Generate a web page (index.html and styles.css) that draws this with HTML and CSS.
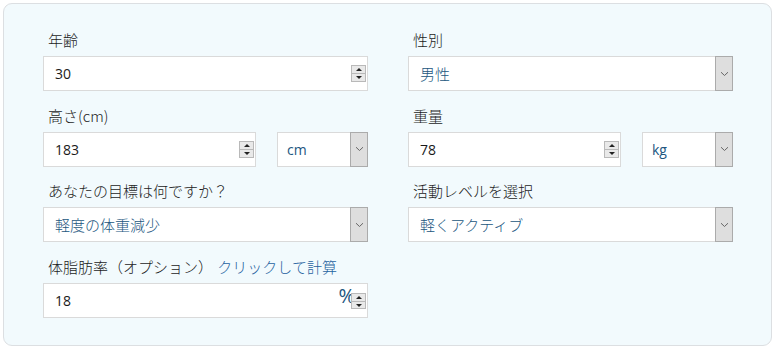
FILE: index.html
```html
<!DOCTYPE html>
<html lang="ja">
<head>
<meta charset="utf-8">
<link rel="stylesheet" href="styles.css">
</head>
<body>
<div class="card">
  <div class="grid">
    <div class="field">
      <div class="label">年齢</div>
      <div class="box">
        <span class="val num">30</span>
        <span class="spin"><i class="up"></i><i class="dn"></i></span>
      </div>
    </div>
    <div class="field">
      <div class="label">性別</div>
      <div class="box select">
        <span class="val sel">男性</span>
        <span class="arrow"><svg width="9" height="6" viewBox="0 0 9 6"><path d="M1 1.2 L4.5 4.5 L8 1.2" fill="none" stroke="#666" stroke-width="1"/></svg></span>
      </div>
    </div>

    <div class="field">
      <div class="label">高さ(cm)</div>
      <div class="pair">
        <div class="box grow">
          <span class="val num">183</span>
          <span class="spin"><i class="up"></i><i class="dn"></i></span>
        </div>
        <div class="box select unit">
          <span class="val sel num">cm</span>
          <span class="arrow"><svg width="9" height="6" viewBox="0 0 9 6"><path d="M1 1.2 L4.5 4.5 L8 1.2" fill="none" stroke="#666" stroke-width="1"/></svg></span>
        </div>
      </div>
    </div>
    <div class="field">
      <div class="label">重量</div>
      <div class="pair">
        <div class="box grow">
          <span class="val num">78</span>
          <span class="spin"><i class="up"></i><i class="dn"></i></span>
        </div>
        <div class="box select unit">
          <span class="val sel num">kg</span>
          <span class="arrow"><svg width="9" height="6" viewBox="0 0 9 6"><path d="M1 1.2 L4.5 4.5 L8 1.2" fill="none" stroke="#666" stroke-width="1"/></svg></span>
        </div>
      </div>
    </div>

    <div class="field">
      <div class="label">あなたの目標は何ですか？</div>
      <div class="box select">
        <span class="val sel">軽度の体重減少</span>
        <span class="arrow"><svg width="9" height="6" viewBox="0 0 9 6"><path d="M1 1.2 L4.5 4.5 L8 1.2" fill="none" stroke="#666" stroke-width="1"/></svg></span>
      </div>
    </div>
    <div class="field">
      <div class="label">活動レベルを選択</div>
      <div class="box select">
        <span class="val sel">軽くアクティブ</span>
        <span class="arrow"><svg width="9" height="6" viewBox="0 0 9 6"><path d="M1 1.2 L4.5 4.5 L8 1.2" fill="none" stroke="#666" stroke-width="1"/></svg></span>
      </div>
    </div>

    <div class="field">
      <div class="label">体脂肪率（オプション） <a class="link">クリックして計算</a></div>
      <div class="box">
        <span class="val num">18</span>
        <span class="pct">%</span>
        <span class="spin small"><i class="up"></i><i class="dn"></i></span>
      </div>
    </div>
  </div>
</div>
</body>
</html>
```

FILE: styles.css
```css
html, body {
  margin: 0;
  padding: 0;
  background: #ffffff;
}
body {
  padding: 3px 3px 2px 3px;
  font-family: "Noto Sans CJK JP", "Noto Sans", sans-serif;
  font-weight: 300;
  color: #222;
}
.card {
  box-sizing: border-box;
  width: 769px;
  height: 343px;
  border: 1px solid #dcdfe2;
  border-radius: 9px;
  background: #f2fafd;
  padding: 26px 38px 0 39px;
}
.grid {
  display: grid;
  grid-template-columns: 325px 325px;
  column-gap: 40px;
  row-gap: 14.67px;
}
.label {
  font-size: 15px;
  line-height: 20px;
  height: 20px;
  margin-bottom: 6px;
  padding-left: 5px;
  color: #1c1c1c;
  white-space: nowrap;
}
.link {
  color: #1f62a0;
  margin-left: 1px;
}
.box {
  box-sizing: border-box;
  height: 35px;
  background: #fff;
  border: 1px solid #dadada;
  display: flex;
  align-items: center;
  padding-left: 11px;
  padding-right: 1px;
}
.val {
  flex: 1;
  font-size: 15px;
  white-space: nowrap;
  color: #1a1a1a;
}
.num {
  font-family: "Open Sans", "Noto Sans", sans-serif;
  font-weight: 400;
  font-size: 14px;
}
.sel {
  color: #225680;
}
.pair {
  display: flex;
  gap: 21px;
}
.grow {
  flex: 1;
}
.unit {
  width: 91px;
  flex: none;
  padding-left: 9px;
}
.select {
  padding-right: 0;
}
.arrow {
  box-sizing: border-box;
  align-self: stretch;
  width: 18px;
  margin: -1px -1px -1px 0;
  background: #dedede;
  border: 1px solid #ababab;
  display: flex;
  align-items: center;
  justify-content: center;
}
.spin {
  width: 15px;
  height: 17px;
  margin-right: 0;
  display: flex;
  flex-direction: column;
  box-sizing: border-box;
  border: 1px solid #b9b9b9;
  background: #e9e9e9;
}
.spin i {
  flex: 1;
  display: flex;
  align-items: center;
  justify-content: center;
}
.spin .up {
  border-bottom: 1px solid #b9b9b9;
}
.spin .up::before {
  content: "";
  border-left: 3px solid transparent;
  border-right: 3px solid transparent;
  border-bottom: 3px solid #222;
}
.spin .dn::before {
  content: "";
  border-left: 3px solid transparent;
  border-right: 3px solid transparent;
  border-top: 3px solid #222;
}
.pct {
  font-family: "Open Sans", "Noto Sans", sans-serif;
  font-weight: 400;
  font-size: 20px;
  color: #225680;
  margin-right: -4px;
  margin-top: -10px;
}
.spin.small {
  margin-top: 2px;
  height: 16px;
}
```
